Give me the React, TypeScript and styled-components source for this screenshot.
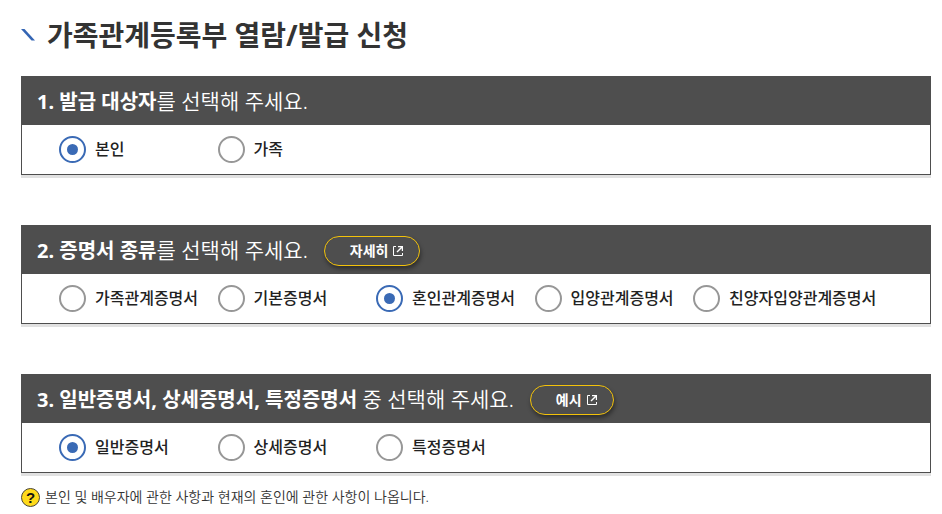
import React, { useState } from "react";
import styled, { createGlobalStyle } from "styled-components";

const GlobalStyle = createGlobalStyle`
  * { box-sizing: border-box; }
  body {
    margin: 0;
    background: #fff;
    color: #222;
    font-family: "Noto Sans", "Noto Sans CJK KR", sans-serif;
  }
`;

const Page = styled.main`
  padding: 15px 11px 0 21px;
`;

const TitleRow = styled.header`
  display: flex;
  align-items: center;
  gap: 12px;
  height: 40px;
  margin-bottom: 21px;
`;

const TitleMark = styled.svg`
  flex: none;
  width: 14px;
  height: 12px;
`;

const Title = styled.h1`
  margin: 0;
  font-size: 28px;
  line-height: 40px;
  font-weight: 700;
  color: #333;
`;

const Section = styled.section`
  margin-bottom: 50px;
  border: 1px solid #4e4e4e;
  box-shadow: 0 3px 0 #e1e1e1;

  &:last-of-type {
    margin-bottom: 12px;
  }
`;

const SectionHeader = styled.div`
  display: flex;
  align-items: center;
  gap: 16px;
  height: 48px;
  padding: 0 15px;
  background: #4e4e4e;
`;

const Question = styled.h2`
  margin: 0;
  color: #fff;
  font-size: 21px;
  line-height: 30px;
  font-weight: 350;
  white-space: nowrap;

  strong {
    font-size: 20px;
    font-weight: 700;
  }
`;

const PillButton = styled.button`
  display: flex;
  align-items: center;
  gap: 4px;
  height: 30px;
  margin-top: 2px;
  padding: 0 15px 0 25px;
  border: 1px solid #f3c20a;
  border-radius: 15px;
  background: #4e4e4e;
  box-shadow: 1px 3px 4px rgba(0, 0, 0, 0.4);
  color: #fff;
  font: inherit;
  font-size: 14px;
  line-height: 20px;
  font-weight: 700;
  cursor: pointer;
`;

const Options = styled.div`
  display: flex;
  align-items: center;
  height: 49px;
  padding-left: 37px;
`;

const Option = styled.label`
  display: flex;
  flex: none;
  align-items: center;
  gap: 9px;
  min-width: 18.2%;
  font-size: 16px;
  font-weight: 500;
  white-space: nowrap;
  cursor: pointer;
`;

const OptionText = styled.span`
  padding-bottom: 2px;
  line-height: 24px;
`;

const Radio = styled.input`
  appearance: none;
  flex: none;
  display: grid;
  place-items: center;
  width: 27px;
  height: 27px;
  margin: 0;
  border: 2px solid #979797;
  border-radius: 50%;
  background: #fff;

  &:checked {
    border-color: #3a6ab5;
  }

  &:checked::before {
    content: "";
    width: 11px;
    height: 11px;
    border-radius: 50%;
    background: #3a6ab5;
  }
`;

const Note = styled.p`
  display: flex;
  align-items: center;
  gap: 5px;
  margin: 0;
  color: #333;
  font-size: 14px;
  line-height: 24px;
  font-weight: 350;
`;

const HelpMark = styled.span`
  display: grid;
  place-items: center;
  flex: none;
  width: 19px;
  height: 19px;
  border: 1px solid #4b4634;
  border-radius: 50%;
  background: #ffda1a;
  color: #111;
  font-family: "Liberation Sans", sans-serif;
  font-size: 15px;
  line-height: 17px;
  font-weight: 700;
`;

function ExternalIcon() {
  return (
    <svg width="12" height="12" viewBox="0 0 12 12" fill="none" stroke="#fff" aria-hidden="true">
      <path d="M4 1.500H1.500v9h9V8" />
      <path d="M6 1h5v5H9.800V3.200L5.500 7.500l-1-1L8.800 2.200H6z" fill="#fff" stroke="none" />
    </svg>
  );
}

type GroupProps = {
  name: string;
  strong: string;
  rest: string;
  options: string[];
  initial: number;
  action?: string;
};

function QuestionGroup({ name, strong, rest, options, initial, action }: GroupProps) {
  const [selected, setSelected] = useState(initial);
  const titleId = `${name}-title`;
  return (
    <Section>
      <SectionHeader>
        <Question id={titleId}>
          <strong>{strong}</strong>
          {rest}
        </Question>
        {action && (
          <PillButton type="button">
            {action}
            <ExternalIcon />
          </PillButton>
        )}
      </SectionHeader>
      <Options role="radiogroup" aria-labelledby={titleId}>
        {options.map((label, i) => (
          <Option key={label}>
            <Radio type="radio" name={name} checked={selected === i} onChange={() => setSelected(i)} />
            <OptionText>{label}</OptionText>
          </Option>
        ))}
      </Options>
    </Section>
  );
}

export default function App() {
  return (
    <>
      <GlobalStyle />
      <Page>
        <TitleRow>
          <TitleMark viewBox="0 0 14 12" aria-hidden="true">
            <path d="M0 0h3.500L14 11.500h-3.500z" fill="#3465b4" />
          </TitleMark>
          <Title>가족관계등록부 열람/발급 신청</Title>
        </TitleRow>
        <QuestionGroup
          name="target"
          strong="1. 발급 대상자"
          rest="를 선택해 주세요."
          options={["본인", "가족"]}
          initial={0}
        />
        <QuestionGroup
          name="certificate"
          strong="2. 증명서 종류"
          rest="를 선택해 주세요."
          action="자세히"
          options={["가족관계증명서", "기본증명서", "혼인관계증명서", "입양관계증명서", "친양자입양관계증명서"]}
          initial={2}
        />
        <QuestionGroup
          name="detail"
          strong="3. 일반증명서, 상세증명서, 특정증명서"
          rest=" 중 선택해 주세요."
          action="예시"
          options={["일반증명서", "상세증명서", "특정증명서"]}
          initial={0}
        />
        <Note>
          <HelpMark aria-hidden="true">?</HelpMark>
          본인 및 배우자에 관한 사항과 현재의 혼인에 관한 사항이 나옵니다.
        </Note>
      </Page>
    </>
  );
}
